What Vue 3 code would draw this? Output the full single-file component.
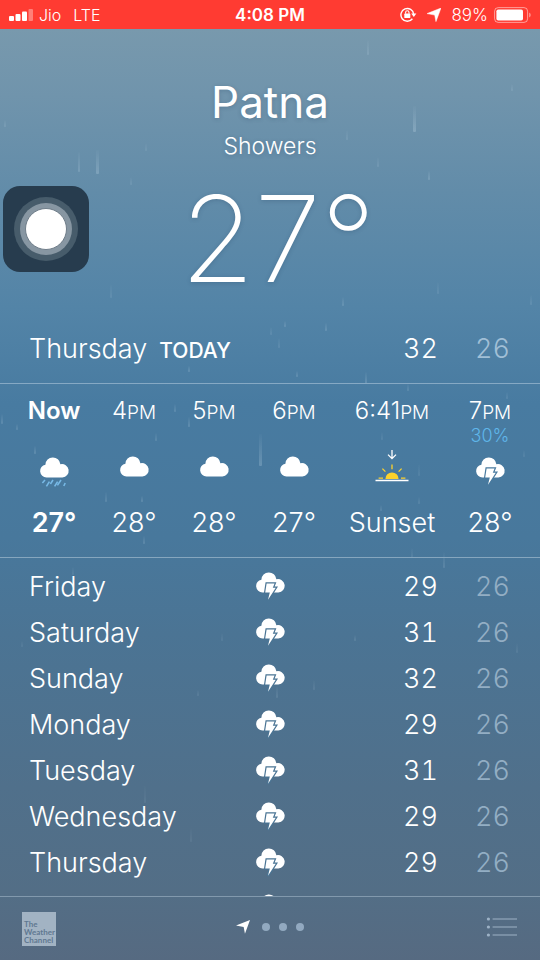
<script setup>
const cloud = 'M6.5 20.4A6.4 6.4 0 0 1 5.4 7.7A7.52 7.52 0 0 1 20.4 7.2A6.7 6.7 0 1 1 22.4 20.4Z'
const bolt = 'M10.6 11.4H18.6L16.8 15.8H19.8L12 27.8L13.8 20.6H9.2Z'
const arrow = 'M0 6L15 0L9.6 14.6L8.2 7.6Z'

const hours = [
  { time: 'Now', icon: 'rain', value: '27°', now: true },
  { time: '4', suffix: 'PM', icon: 'cloud', value: '28°' },
  { time: '5', suffix: 'PM', icon: 'cloud', value: '28°' },
  { time: '6', suffix: 'PM', icon: 'cloud', value: '27°' },
  { time: '6:41', suffix: 'PM', icon: 'sunset', value: 'Sunset', wide: true },
  { time: '7', suffix: 'PM', chance: '30%', icon: 'storm', value: '28°' },
]

const days = [
  { name: 'Friday', high: 29, low: 26 },
  { name: 'Saturday', high: 31, low: 26 },
  { name: 'Sunday', high: 32, low: 26 },
  { name: 'Monday', high: 29, low: 26 },
  { name: 'Tuesday', high: 31, low: 26 },
  { name: 'Wednesday', high: 29, low: 26 },
  { name: 'Thursday', high: 29, low: 26 },
  { name: 'Friday', high: 29, low: 26 },
]

// x, y, length and opacity of each raindrop
const drops = [
  [367, 40, 15, 0.2], [413, 106, 26, 0.32], [78, 152, 20, 0.24], [96, 150, 24, 0.3],
  [346, 130, 10, 0.16], [428, 171, 9, 0.26], [377, 157, 10, 0.16], [4, 120, 7, 0.2],
  [145, 143, 8, 0.14], [130, 177, 8, 0.16], [511, 84, 7, 0.18], [110, 284, 14, 0.14],
  [342, 297, 9, 0.22], [437, 282, 12, 0.14], [530, 295, 10, 0.16], [284, 321, 6, 0.24],
  [325, 323, 8, 0.24], [270, 327, 8, 0.16], [278, 338, 10, 0.16], [188, 366, 6, 0.26],
  [296, 371, 6, 0.24], [365, 372, 12, 0.26], [407, 384, 7, 0.2], [506, 392, 7, 0.16],
  [1, 414, 10, 0.22], [16, 424, 6, 0.22], [174, 404, 8, 0.22], [188, 417, 10, 0.24],
  [155, 433, 8, 0.2], [34, 446, 8, 0.24], [259, 434, 32, 0.3], [381, 432, 8, 0.14],
  [523, 450, 7, 0.14], [418, 464, 12, 0.12], [105, 492, 10, 0.2], [141, 496, 6, 0.24],
  [380, 505, 6, 0.18], [418, 497, 7, 0.16], [143, 536, 8, 0.22], [411, 548, 10, 0.14],
  [443, 552, 16, 0.18], [72, 567, 8, 0.14], [221, 633, 8, 0.12], [354, 635, 6, 0.18],
  [516, 643, 10, 0.12], [21, 641, 6, 0.12], [313, 680, 10, 0.14], [276, 686, 12, 0.16],
  [197, 690, 6, 0.14], [144, 785, 18, 0.1], [190, 828, 14, 0.1],
]
</script>

<template>
  <div class="screen">
    <svg class="rain" viewBox="0 0 540 960" preserveAspectRatio="xMidYMid slice" aria-hidden="true">
      <defs>
        <linearGradient id="drop" x1="0" y1="0" x2="0" y2="1">
          <stop offset="0" stop-color="#cfe4f2" stop-opacity="0.1" />
          <stop offset="1" stop-color="#cfe4f2" />
        </linearGradient>
      </defs>
      <rect
        v-for="([x, y, length, alpha], i) in drops"
        :key="i"
        :x="x"
        :y="y"
        :width="length > 22 ? 3 : 2"
        :height="length"
        rx="1"
        fill="url(#drop)"
        :opacity="alpha"
      />
    </svg>

    <header class="status">
      <div class="carrier">
        <svg width="24" height="12" viewBox="0 0 24 12" fill="#fff" aria-hidden="true">
          <rect x="0" y="7" width="5" height="5" rx="1" />
          <rect x="6.5" y="5" width="5" height="7" rx="1" />
          <rect x="13" y="2.5" width="5" height="9.5" rx="1" />
          <rect x="19.5" y="0" width="4.5" height="12" rx="1" opacity="0.35" />
        </svg>
        <span>Jio</span>
        <span class="network">LTE</span>
      </div>
      <time class="clock">4:08 PM</time>
      <div class="indicators">
        <svg width="17" height="15" viewBox="0 0 17 15" aria-hidden="true">
          <path d="M12.4 11.8A6.4 6.4 0 1 1 13.7 7.2" fill="none" stroke="#fff" stroke-width="1.4" />
          <path d="M11.2 6.6H16.4L13.8 10Z" fill="#fff" />
          <rect x="4.3" y="6.6" width="6" height="4.4" rx="0.6" fill="#fff" />
          <path d="M5.6 6.8V5.4A1.7 1.7 0 0 1 9 5.4V6.8" fill="none" stroke="#fff" stroke-width="1.1" />
        </svg>
        <svg class="gps" width="14" height="14" viewBox="0 0 15 15" aria-hidden="true">
          <path :d="arrow" fill="#fff" stroke="#fff" stroke-width="0.5" />
        </svg>
        <span class="charge">89%</span>
        <svg width="37" height="16" viewBox="0 0 37 16" aria-hidden="true">
          <rect x="0.6" y="0.6" width="33" height="14.8" rx="3.6" fill="none" stroke="#fff" stroke-opacity="0.5" />
          <rect x="2.4" y="2.4" width="26.6" height="11.2" rx="1.8" fill="#fff" />
          <path d="M35.2 5.4A3 3 0 0 1 35.2 10.6Z" fill="#fff" opacity="0.5" />
        </svg>
      </div>
    </header>

    <main class="weather">
      <section class="current">
        <h1>Patna</h1>
        <p class="condition">Showers</p>
        <p class="temperature">27°</p>
      </section>

      <section class="today">
        <h2>Thursday</h2>
        <span class="label">TODAY</span>
        <span class="high">32</span>
        <span class="low">26</span>
      </section>

      <ul class="hours">
        <li v-for="hour in hours" :key="hour.time" :class="{ now: hour.now, wide: hour.wide }">
          <span class="time">{{ hour.time }}<small v-if="hour.suffix">{{ hour.suffix }}</small></span>
          <span class="chance">{{ hour.chance }}</span>
          <svg v-if="hour.icon === 'sunset'" width="34" height="34" viewBox="0 0 34 34" aria-hidden="true">
            <path d="M17 0V8M13 4.6L17 8.6L21 4.6" fill="none" stroke="#fff" stroke-width="1.3" />
            <path d="M10.4 29A6.6 6.6 0 0 1 23.6 29Z" fill="#fdd22b" />
            <path
              d="M17 14.6V19.2M7.4 18.6L10.4 21.6M26.6 18.6L23.6 21.6M3.6 28.2H8M26 28.2H30.4"
              fill="none"
              stroke="#fdd22b"
              stroke-width="1.3"
            />
            <path d="M0.5 30.6H33.5" stroke="#fff" stroke-width="1.5" />
          </svg>
          <svg v-else width="30" height="34" viewBox="-1 0 30 34" aria-hidden="true">
            <path :d="cloud" fill="#fff" :transform="hour.icon === 'cloud' ? 'translate(0 6)' : 'translate(0 7)'" />
            <path
              v-if="hour.icon === 'rain'"
              d="M5 30L2.4 33M9.4 31.6L6.4 36.4M13 30L10.4 34M17.6 31.6L14.6 36.4M21 30L17.4 35.4M25.2 33L23.8 36"
              fill="none"
              stroke="#77b9e6"
              stroke-width="1.6"
            />
            <path
              v-if="hour.icon === 'storm'"
              class="bolt"
              :d="bolt"
              transform="translate(0 7)"
              stroke="#487a9f"
            />
          </svg>
          <span class="value">{{ hour.value }}</span>
        </li>
      </ul>

      <div class="forecast">
        <table>
          <tbody>
            <tr v-for="(day, i) in days" :key="i">
              <th scope="row">{{ day.name }}</th>
              <td class="sky">
                <svg width="30" height="30" viewBox="-1 0 30 30" role="img" aria-label="Thunderstorms">
                  <path :d="cloud" fill="#fff" />
                  <path class="bolt" :d="bolt" stroke="#4a7494" />
                </svg>
              </td>
              <td class="high">{{ day.high }}</td>
              <td class="low">{{ day.low }}</td>
            </tr>
          </tbody>
        </table>
      </div>
    </main>

    <footer class="toolbar">
      <a class="brand" href="#">The<br />Weather<br />Channel</a>
      <nav class="pages" aria-label="Cities">
        <svg width="14" height="14" viewBox="0 0 15 15" aria-hidden="true">
          <path :d="arrow" fill="#fff" />
        </svg>
        <i></i><i></i><i></i>
      </nav>
      <button class="list" type="button" aria-label="City list">
        <svg width="32" height="20" viewBox="0 0 32 20" aria-hidden="true">
          <g fill="#9db2c6">
            <circle cx="2.4" cy="2" r="1.6" />
            <circle cx="2.4" cy="10" r="1.6" />
            <circle cx="2.4" cy="18" r="1.6" />
          </g>
          <path d="M6.6 2H31M6.6 10H31M6.6 18H31" stroke="#9db2c6" stroke-width="1.2" />
        </svg>
      </button>
    </footer>

    <button class="assistive" type="button" aria-label="AssistiveTouch"><span></span></button>
  </div>
</template>

<style>
body {
  margin: 0;
}
</style>

<style scoped>
.screen {
  position: relative;
  display: flex;
  flex-direction: column;
  height: 100vh;
  overflow: hidden;
  color: #fff;
  font-family: Inter, 'Liberation Sans', sans-serif;
  font-weight: 350;
  background: linear-gradient(
    #7899ad 3%,
    #7094ac 10%,
    #628ca9 20%,
    #5384a7 32%,
    #487ba1 42%,
    #48789c 56%,
    #4b7494 66%,
    #50708b 82%,
    #536e86 93%,
    #566a81 100%
  );
}

.rain {
  position: absolute;
  inset: 0;
  width: 100%;
  height: 100%;
  opacity: 0.8;
}

h1,
h2,
p,
ul {
  margin: 0;
  padding: 0;
  font-weight: inherit;
}

.status {
  position: relative;
  display: grid;
  grid-template-columns: 1fr auto 1fr;
  align-items: center;
  height: 29px;
  padding: 0 9px;
  background: #ff3b32;
  font-size: 17px;
}

.carrier,
.indicators {
  display: flex;
  align-items: center;
  gap: 6px;
}

.carrier {
  font-size: 16px;
}

.network {
  margin-left: 6px;
}

.indicators {
  justify-content: flex-end;
}

.gps {
  margin: 0 4px;
}

.clock {
  font-weight: 600;
}

.weather {
  position: relative;
  display: flex;
  flex: 1;
  flex-direction: column;
  min-height: 0;
}

.current {
  height: 286px;
  padding-top: 44px;
  box-sizing: border-box;
  text-align: center;
  text-shadow: 0 1px 4px rgba(30, 60, 90, 0.25);
}

h1 {
  font-size: 44px;
  font-weight: 400;
  line-height: 58px;
}

.condition {
  font-size: 23px;
  line-height: 30px;
}

.temperature {
  padding-left: 16px;
  font-size: 120px;
  font-weight: 150;
  line-height: 156px;
}

.today {
  display: flex;
  align-items: baseline;
  height: 68px;
  padding: 0 30px 0 29px;
  box-sizing: border-box;
  font-size: 27px;
  line-height: 68px;
}

h2 {
  font-size: 27px;
}

.label {
  margin-left: 12px;
  font-size: 21px;
  font-weight: 500;
}

.today .high {
  margin-left: auto;
}

.today .low {
  width: 72px;
}

.high,
.low {
  font-variant-numeric: tabular-nums;
}

.low {
  color: #a1bfd6;
  text-align: right;
}

.hours {
  display: flex;
  justify-content: space-between;
  height: 175px;
  padding: 12px 25px 0 29px;
  box-sizing: border-box;
  border-top: 1px solid #86a9c4;
  border-bottom: 1px solid #86a6be;
  list-style: none;
}

.hours li {
  display: flex;
  flex-direction: column;
  align-items: center;
  width: 50px;
  white-space: nowrap;
}

.hours .wide {
  width: 86px;
}

.time {
  font-size: 24px;
  line-height: 30px;
}

.time small {
  font-size: 19px;
  line-height: 20px;
}

.chance {
  height: 24px;
  color: #5fb6ea;
  font-size: 18px;
  line-height: 20px;
}

.hours svg {
  overflow: visible;
}

.bolt {
  fill: #fff;
  stroke-width: 2.4;
  paint-order: stroke;
}

.value {
  margin-top: 20px;
  font-size: 27px;
  line-height: 38px;
}

.now .time,
.now .value {
  font-weight: 600;
}

.forecast {
  flex: 1;
  min-height: 0;
  padding-top: 6px;
  overflow: hidden;
}

table {
  width: 100%;
  border-collapse: collapse;
  table-layout: fixed;
  font-size: 27px;
}

th,
td {
  height: 46px;
  padding: 0;
  line-height: 46px;
}

th {
  width: 43%;
  padding-left: 29px;
  box-sizing: border-box;
  font-weight: inherit;
  text-align: left;
}

.sky {
  width: 14%;
  text-align: center;
}

.sky svg {
  display: block;
  margin: 0 auto;
}

td.high {
  text-align: right;
}

td.low {
  width: 102px;
  padding-right: 30px;
  box-sizing: border-box;
  color: #93aec4;
}

.toolbar {
  position: relative;
  display: grid;
  grid-template-columns: 1fr auto 1fr;
  align-items: center;
  height: 64px;
  padding: 0 22px;
  box-sizing: border-box;
  border-top: 1px solid #8299ad;
}

.brand {
  width: 34px;
  height: 34px;
  padding: 8px 0 0 2px;
  box-sizing: border-box;
  background: #a2b3c3;
  color: #5f7891;
  font-family: Lato, 'Noto Sans', sans-serif;
  font-size: 8px;
  font-weight: 700;
  line-height: 8px;
  text-decoration: none;
}

.pages {
  display: flex;
  align-items: center;
  gap: 9px;
  padding-bottom: 4px;
}

.pages svg {
  margin-right: 3px;
}

.pages i {
  width: 8px;
  height: 8px;
  border-radius: 50%;
  background: #92a9c0;
}

.list {
  justify-self: end;
  padding: 0 0 4px;
  border: 0;
  background: none;
}

.list svg {
  display: block;
}

.assistive {
  position: absolute;
  top: 186px;
  left: 3px;
  display: grid;
  place-items: center;
  width: 86px;
  height: 86px;
  padding: 0;
  border: 0;
  border-radius: 17px;
  background: #273c4e;
}

.assistive span {
  width: 40px;
  height: 40px;
  border: 1px solid #6f7d89;
  border-radius: 50%;
  background: #fff;
  box-shadow: 0 0 0 5px #8796a2, 0 0 0 11px #475c6b;
}
</style>
